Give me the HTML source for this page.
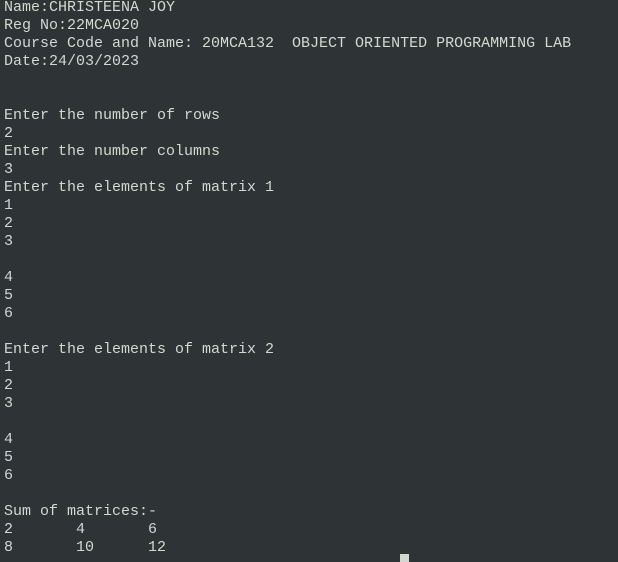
<!DOCTYPE html>
<html><head><meta charset="utf-8"><style>
html,body{margin:0;padding:0;width:618px;height:560px;overflow:hidden;background:#2e3436;}
pre{margin:0;position:absolute;left:4px;top:-1px;font-family:"Liberation Mono","DejaVu Sans Mono",monospace;font-size:15px;line-height:18px;color:#d3d7cf;tab-size:8;}
.cur{position:absolute;left:400px;top:554px;width:9px;height:8px;background:#d3d7cf;}
</style></head><body>
<pre>Name:CHRISTEENA JOY
Reg No:22MCA020
Course Code and Name: 20MCA132  OBJECT ORIENTED PROGRAMMING LAB
Date:24/03/2023


Enter the number of rows
2
Enter the number columns
3
Enter the elements of matrix 1
1
2
3

4
5
6

Enter the elements of matrix 2
1
2
3

4
5
6

Sum of matrices:-
2       4       6
8       10      12</pre>
<div class="cur"></div>
</body></html>
